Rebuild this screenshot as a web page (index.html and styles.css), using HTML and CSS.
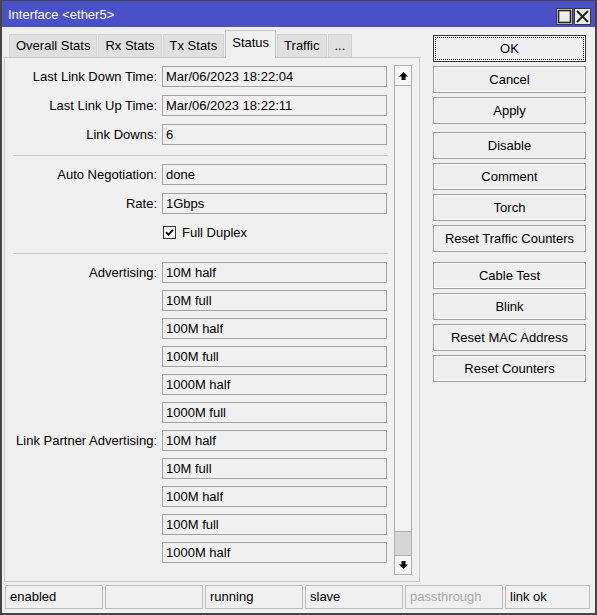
FILE: index.html
```html
<!DOCTYPE html>
<html lang="en">
<head>
    <meta charset="utf-8" />
    <title>Interface &lt;ether5&gt;</title>
    <link rel="stylesheet" href="styles.css">
</head>
<body>
    <div class="window">
        <!--标题栏-->
        <div class="titlebar">
            <span class="title">Interface &lt;ether5&gt;</span>
            <div class="winbtns">
                <span class="winbtn">
                    <svg width="15" height="15" viewBox="0 0 15 15"><rect x="1.5" y="1.5" width="12" height="12" fill="none" stroke="#222" stroke-width="1.6" /></svg>
                </span>
                <span class="winbtn">
                    <svg width="15" height="15" viewBox="0 0 15 15"><path d="M2 2L13 13M13 2L2 13" stroke="#222" stroke-width="2" /></svg>
                </span>
            </div>
        </div>

        <div class="main">
            <div class="left">
                <div class="tabs">
                    <span class="tab">Overall Stats</span>
                    <span class="tab">Rx Stats</span>
                    <span class="tab">Tx Stats</span>
                    <span class="tab current">Status</span>
                    <span class="tab">Traffic</span>
                    <span class="tab">...</span>
                </div>
                <div class="panel">
                    <div class="form">
                        <div class="row"><label>Last Link Down Time:</label><span class="field">Mar/06/2023 18:22:04</span></div>
                        <div class="row"><label>Last Link Up Time:</label><span class="field">Mar/06/2023 18:22:11</span></div>
                        <div class="row"><label>Link Downs:</label><span class="field">6</span></div>
                        <div class="sep"></div>
                        <div class="row"><label>Auto Negotiation:</label><span class="field">done</span></div>
                        <div class="row"><label>Rate:</label><span class="field">1Gbps</span></div>
                        <div class="row"><label></label>
                            <span class="check">
                                <svg width="13" height="13" viewBox="0 0 13 13"><rect x="0.5" y="0.5" width="12" height="12" fill="#fafafa" stroke="#333" /><path d="M3 6.2L5.3 8.6L10 3.8" fill="none" stroke="#000" stroke-width="1.8" /></svg>
                                Full Duplex
                            </span>
                        </div>
                        <div class="sep"></div>
                        <div class="list">
                            <div class="row"><label>Advertising:</label><span class="field">10M half</span></div>
                            <div class="row"><label></label><span class="field">10M full</span></div>
                            <div class="row"><label></label><span class="field">100M half</span></div>
                            <div class="row"><label></label><span class="field">100M full</span></div>
                            <div class="row"><label></label><span class="field">1000M half</span></div>
                            <div class="row"><label></label><span class="field">1000M full</span></div>
                            <div class="row"><label>Link Partner Advertising:</label><span class="field">10M half</span></div>
                            <div class="row"><label></label><span class="field">10M full</span></div>
                            <div class="row"><label></label><span class="field">100M half</span></div>
                            <div class="row"><label></label><span class="field">100M full</span></div>
                            <div class="row"><label></label><span class="field">1000M half</span></div>
                        </div>
                    </div>
                    <!--滚动条-->
                    <div class="scrollbar">
                        <span class="arrow up">
                            <svg width="9" height="8" viewBox="0 0 9 8"><polygon points="4.5,0 9,4.5 6.5,4.5 6.5,8 2.5,8 2.5,4.5 0,4.5" fill="#000" /></svg>
                        </span>
                        <div class="track"><span class="thumb"></span></div>
                        <span class="arrow down">
                            <svg width="9" height="8" viewBox="0 0 9 8"><polygon points="2.5,0 6.5,0 6.5,3.5 9,3.5 4.5,8 0,3.5 2.5,3.5" fill="#000" /></svg>
                        </span>
                    </div>
                </div>
            </div>

            <div class="buttons">
                <span class="btn default">OK</span>
                <span class="btn">Cancel</span>
                <span class="btn">Apply</span>
                <span class="btn group">Disable</span>
                <span class="btn">Comment</span>
                <span class="btn">Torch</span>
                <span class="btn">Reset Traffic Counters</span>
                <span class="btn group2">Cable Test</span>
                <span class="btn">Blink</span>
                <span class="btn">Reset MAC Address</span>
                <span class="btn">Reset Counters</span>
            </div>
        </div>

        <!--状态栏-->
        <div class="statusbar">
            <span class="cell">enabled</span>
            <span class="cell"></span>
            <span class="cell">running</span>
            <span class="cell">slave</span>
            <span class="cell muted">passthrough</span>
            <span class="cell last">link ok</span>
        </div>
    </div>
</body>
</html>
```

FILE: styles.css
```css
* {
    margin: 0;
    padding: 0;
    box-sizing: border-box;
}

body {
    font-family: "Liberation Sans", Arial, sans-serif;
    font-size: 13px;
    color: #000;
    background-color: #f0f0f0;
}

.window {
    width: 597px;
    height: 615px;
    border: 2px solid #454545;
    border-top-width: 1px;
    background-color: #f0f0f0;
    display: flex;
    flex-direction: column;
}

.titlebar {
    height: 26px;
    background-color: #4a50c8;
    display: flex;
    justify-content: space-between;
    padding: 0 4px 0 6px;
}

    .titlebar .title {
        color: #fff;
        line-height: 28px;
    }

.winbtns {
    display: flex;
    gap: 1px;
    margin-top: 7px;
}

.winbtn {
    width: 17px;
    height: 17px;
    border: 1px solid #3a3a3a;
    background-color: #ececec;
    display: flex;
    align-items: center;
    justify-content: center;
}

.main {
    flex: 1;
    display: flex;
    min-height: 0;
}

.left {
    width: 416px;
    margin-left: 2px;
    display: flex;
    flex-direction: column;
}

.tabs {
    height: 30px;
    padding: 2px 0 0 5px;
    display: flex;
    align-items: flex-end;
    gap: 1px;
}

    .tabs .tab {
        height: 23px;
        line-height: 22px;
        padding: 0 6px;
        background-color: #e0e0e0;
        border: 1px solid #d2d2d2;
        border-bottom: none;
    }

        .tabs .tab.current {
            height: 28px;
            line-height: 24px;
            background-color: #f0f0f0;
            border-color: #c4c4c4;
            margin-bottom: -1px;
            position: relative;
        }

.panel {
    flex: 1;
    border: 1px solid #c8c8c8;
    display: flex;
    min-height: 0;
    overflow: hidden;
}

.form {
    width: 389px;
    padding-top: 8px;
}

.row {
    display: flex;
    align-items: center;
    height: 21px;
    margin-bottom: 8px;
}

.list .row {
    margin-bottom: 7px;
}

.row label {
    width: 152px;
    text-align: right;
    white-space: nowrap;
}

.row .field {
    width: 225px;
    height: 21px;
    margin-left: 5px;
    border: 1px solid #a3a3a3;
    padding-left: 3px;
    line-height: 19px;
    white-space: nowrap;
}

.check {
    margin-left: 6px;
    display: flex;
    align-items: center;
    gap: 6px;
}

.sep {
    height: 1px;
    margin: 10px 6px 8px 8px;
    background-color: #c8c8c8;
}

.scrollbar {
    width: 18px;
    height: 510px;
    margin: 7px 0 0 0;
    border: 1px solid #b0b0b0;
    background-color: #f3f3f3;
    display: flex;
    flex-direction: column;
}

    .scrollbar .arrow {
        height: 20px;
        display: flex;
        align-items: center;
        justify-content: center;
        background-color: #f6f6f6;
    }

    .scrollbar .up {
        border-bottom: 1px solid #b0b0b0;
    }

    .scrollbar .down {
        height: 19px;
        border-top: 1px solid #b0b0b0;
    }

    .scrollbar .track {
        flex: 1;
        display: flex;
        flex-direction: column;
        justify-content: flex-end;
    }

    .scrollbar .thumb {
        height: 24px;
        background-color: #d6d6d6;
        border-top: 1px solid #b0b0b0;
    }

.buttons {
    width: 153px;
    margin-left: 13px;
    padding-top: 8px;
    display: flex;
    flex-direction: column;
}

    .buttons .btn {
        height: 27px;
        margin-bottom: 4px;
        border: 1px solid #a0a0a0;
        box-shadow: inset 0 0 0 1px #fbfbfb;
        background-color: #efefef;
        text-align: center;
        line-height: 25px;
        white-space: nowrap;
    }

        .buttons .btn.default {
            border-color: #333;
            outline: 1px dotted #000;
            outline-offset: -3px;
        }

        .buttons .btn.group {
            margin-top: 4px;
        }

        .buttons .btn.group2 {
            margin-top: 6px;
        }

.statusbar {
    height: 24px;
    margin: 3px 0 4px 0;
    padding-left: 3px;
    display: flex;
    gap: 2px;
}

    .statusbar .cell {
        width: 98px;
        border: 1px solid #bcbcbc;
        padding-left: 4px;
        line-height: 22px;
    }

        .statusbar .cell.last {
            width: 85px;
        }

        .statusbar .cell.muted {
            color: #a8a8a8;
        }
```
